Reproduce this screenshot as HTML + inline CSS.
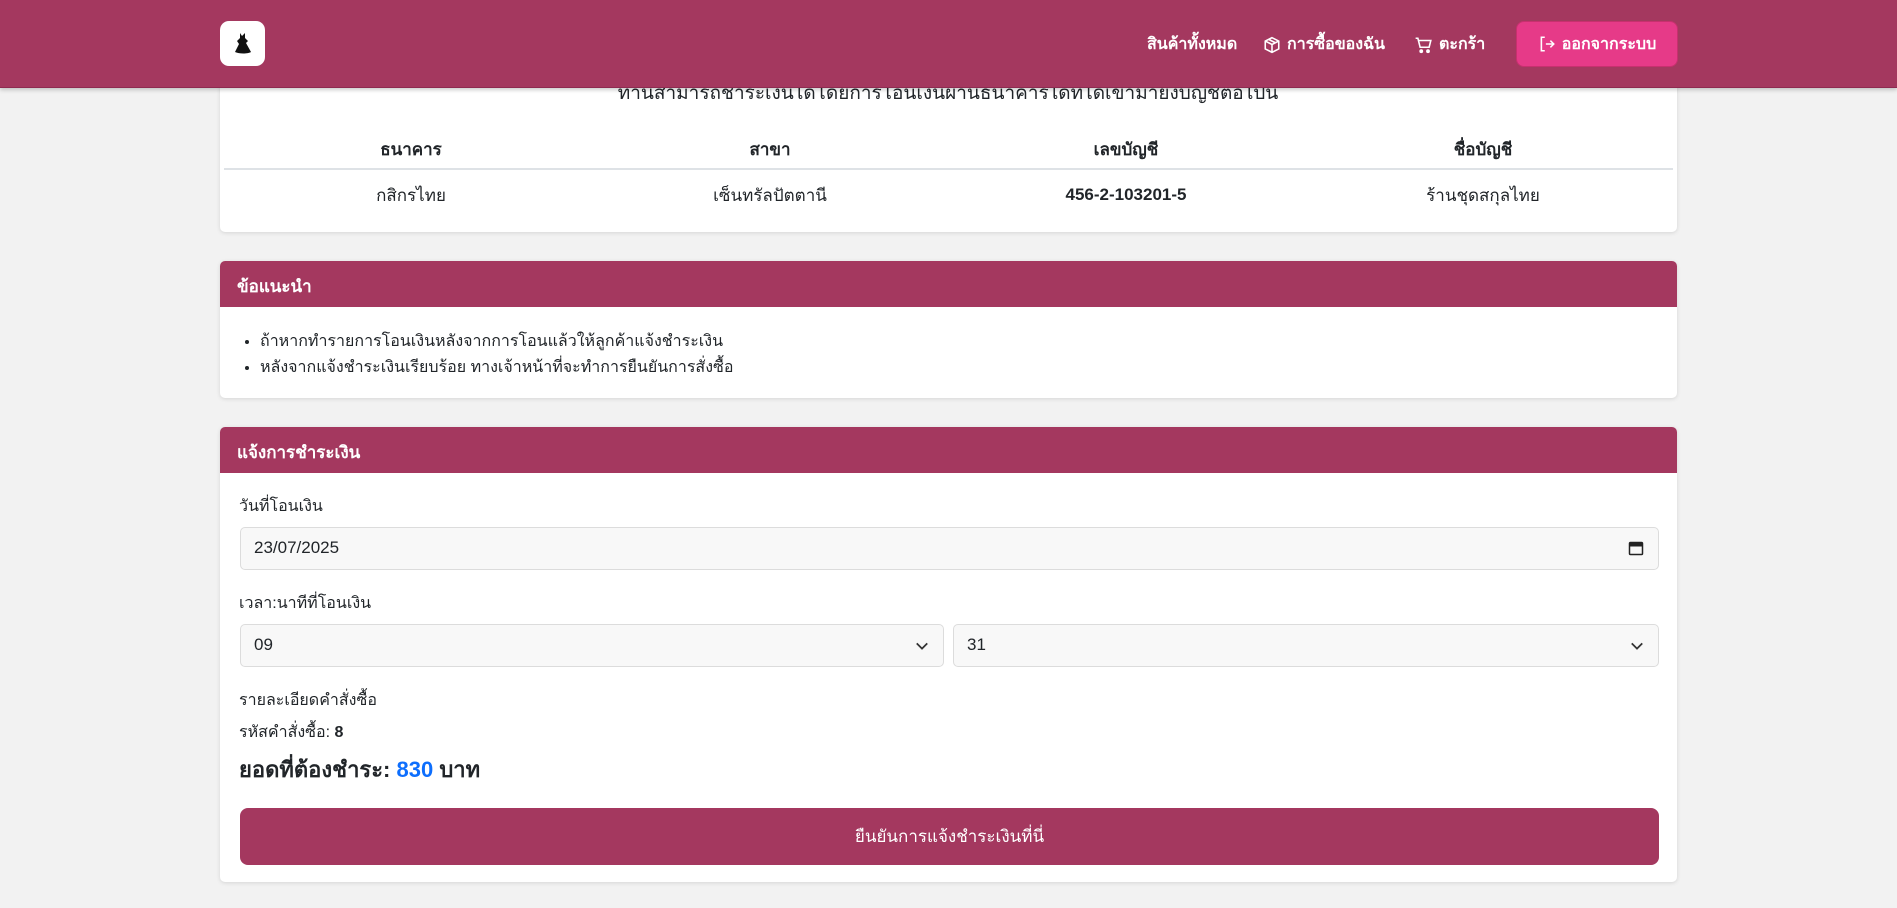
<!DOCTYPE html>
<html><head><meta charset="utf-8"><style>
*{box-sizing:border-box;margin:0;padding:0}
body{width:1897px;height:908px;overflow:hidden;background:#f2f2f2;font-family:"Liberation Sans","DejaVu Sans",sans-serif;font-size:17px;color:#212529;position:relative}
.hdr{position:absolute;left:0;top:0;width:1897px;height:88px;background:#a4385f;z-index:5;box-shadow:0 2px 4px rgba(0,0,0,.2);border-bottom:1px solid #8e2a50}
.logo{position:absolute;left:220px;top:21px;width:45px;height:45px;background:#fff;border-radius:9px}
.nav{position:absolute;top:32px;color:#fff;font-weight:bold;font-size:16px;white-space:nowrap;display:flex;align-items:center;gap:6px}
.btn-out{position:absolute;left:1516px;top:21px;width:162px;height:46px;background:#e63a88;border-radius:8px;border:1px solid #c7306f;color:#fff;font-weight:bold;font-size:16px;display:flex;align-items:center;justify-content:center;gap:6px}
.card{position:absolute;left:220px;width:1457px;background:#fff;border-radius:5px;box-shadow:0 1px 4px rgba(0,0,0,.12);overflow:hidden}
.ch{height:46px;background:#a4385f;color:#fff;font-weight:bold;font-size:17px;padding:12px 17px}
.c{position:absolute;text-align:center;transform:translateX(-50%);white-space:nowrap}
.lbl{position:absolute;left:19px;font-size:16px}
.inp{position:absolute;height:43px;background:#f8f8f8;border:1px solid #dcdcdc;border-radius:5px;padding:10px 13px;font-size:17px}
</style></head><body>
<div class="hdr">
  <div class="logo"><svg width="45" height="45" viewBox="0 0 45 45"><path d="M20 12l2 3 3-3 0 5 3 3-2 2 5 9c-3 2-12 2-16 0l4-8-2-3 3-3z" fill="#111"/></svg></div>
  <div class="nav" style="left:1147px">สินค้าทั้งหมด</div>
  <div class="nav" style="left:1263px"><svg width="18" height="18" viewBox="0 0 16 16" fill="none" stroke="#fff" stroke-width="1.4"><path d="M8 1.5l6 3v7l-6 3-6-3v-7z M2 4.5l6 3 6-3 M8 7.5v7 M5 3l6 3"/></svg>การซื้อของฉัน</div>
  <div class="nav" style="left:1414px"><svg width="19" height="18" viewBox="0 0 16 16" fill="none" stroke="#fff" stroke-width="1.4"><path d="M1 2h2l2 8h8l1.5-6H4"/><circle cx="6" cy="13.5" r="1" fill="#fff"/><circle cx="12" cy="13.5" r="1" fill="#fff"/></svg>ตะกร้า</div>
  <div class="btn-out"><svg width="18" height="18" viewBox="0 0 16 16" fill="none" stroke="#fff" stroke-width="1.4"><path d="M6 2H3v12h3 M7 8h7 M11 5l3 3-3 3"/></svg>ออกจากระบบ</div>
</div>

<div class="card" style="top:60px;height:172px">
  <div class="c" style="left:728px;top:18px;font-size:19px">ท่านสามารถชำระเงินได้โดยการโอนเงินผ่านธนาคารได้ที่ได้เข้ามายังบัญชีต่อไปนี้</div>
  <div class="c" style="left:191px;top:76px;font-weight:bold">ธนาคาร</div>
  <div class="c" style="left:550px;top:76px;font-weight:bold">สาขา</div>
  <div class="c" style="left:906px;top:76px;font-weight:bold">เลขบัญชี</div>
  <div class="c" style="left:1263px;top:76px;font-weight:bold">ชื่อบัญชี</div>
  <div style="position:absolute;left:4px;right:4px;top:108px;border-top:2px solid #dee2e6"></div>
  <div class="c" style="left:191px;top:122px">กสิกรไทย</div>
  <div class="c" style="left:550px;top:122px">เซ็นทรัลปัตตานี</div>
  <div class="c" style="left:906px;top:125px;font-weight:bold">456-2-103201-5</div>
  <div class="c" style="left:1263px;top:122px">ร้านชุดสกุลไทย</div>
</div>

<div class="card" style="top:261px;height:137px">
  <div class="ch">ข้อแนะนำ</div>
  <ul style="position:absolute;left:40px;top:68px;font-size:16px;line-height:26px">
    <li>ถ้าหากทำรายการโอนเงินหลังจากการโอนแล้วให้ลูกค้าแจ้งชำระเงิน</li>
    <li>หลังจากแจ้งชำระเงินเรียบร้อย ทางเจ้าหน้าที่จะทำการยืนยันการสั่งซื้อ</li>
  </ul>
</div>

<div class="card" style="top:427px;height:455px">
  <div class="ch">แจ้งการชำระเงิน</div>
  <div class="lbl" style="top:67px">วันที่โอนเงิน</div>
  <div class="inp" style="left:20px;top:100px;width:1419px">23/07/2025
    <svg style="position:absolute;right:14px;top:12px" width="16" height="16" viewBox="0 0 16 16"><rect x="1.5" y="2.5" width="13" height="12" rx="1" fill="none" stroke="#222" stroke-width="1.5"/><rect x="1.5" y="2.5" width="13" height="4" fill="#222"/></svg></div>
  <div class="lbl" style="top:164px">เวลา:นาทีที่โอนเงิน</div>
  <div class="inp" style="left:20px;top:197px;width:704px">09
    <svg style="position:absolute;right:14px;top:14px" width="14" height="14" viewBox="0 0 16 16"><path d="M2 5l6 6 6-6" fill="none" stroke="#333" stroke-width="2"/></svg></div>
  <div class="inp" style="left:733px;top:197px;width:706px">31
    <svg style="position:absolute;right:14px;top:14px" width="14" height="14" viewBox="0 0 16 16"><path d="M2 5l6 6 6-6" fill="none" stroke="#333" stroke-width="2"/></svg></div>
  <div class="lbl" style="top:261px">รายละเอียดคำสั่งซื้อ</div>
  <div class="lbl" style="top:293px">รหัสคำสั่งซื้อ: <b>8</b></div>
  <div class="lbl" style="top:325px;font-size:22px;font-weight:bold">ยอดที่ต้องชำระ: <span style="color:#0d6efd">830</span> บาท</div>
  <div style="position:absolute;left:20px;top:381px;width:1419px;height:57px;background:#a4385f;border-radius:8px;color:#fff;font-size:17px;display:flex;align-items:center;justify-content:center">ยืนยันการแจ้งชำระเงินที่นี่</div>
</div>
</body></html>
